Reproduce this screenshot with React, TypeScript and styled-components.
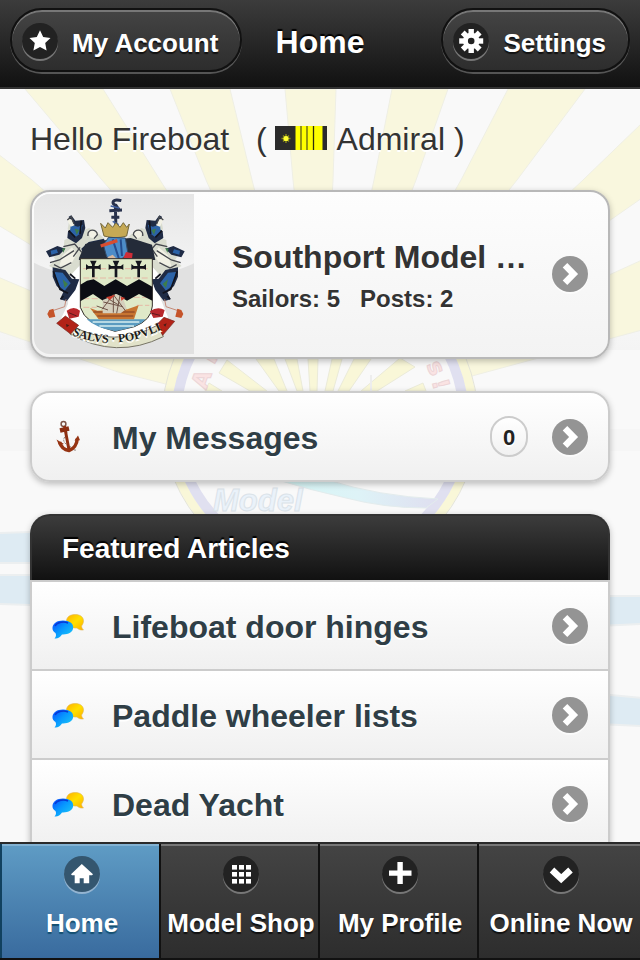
import React from "react";
import styled, { createGlobalStyle, css } from "styled-components";

const GlobalStyle = createGlobalStyle`
  *, *::before, *::after { box-sizing: border-box; }
  body {
    margin: 0;
    background: #f9f9f9;
    color: #333;
    font-family: "Liberation Sans", Arial, Helvetica, sans-serif;
  }
`;

const Page = styled.div`
  display: flex;
  flex-direction: column;
  height: 100vh;
  overflow: hidden;
`;

const Header = styled.header`
  display: grid;
  grid-template-columns: 1fr auto 1fr;
  align-items: start;
  padding: 8px 10px 11px;
  border-bottom: 2px solid #333;
  background: linear-gradient(#3c3c3c, #111);
  color: #fff;
`;

const Title = styled.h1`
  margin: 0;
  font-size: 32px;
  line-height: 68px;
  text-shadow: 0 -2px 1px #000;
`;

const PillButton = styled.button<{ $end?: boolean }>`
  display: flex;
  align-items: center;
  gap: 14px;
  height: 64px;
  justify-self: ${(p) => (p.$end ? "end" : "start")};
  padding: 2px 22px 0 10px;
  border: 2px solid #111;
  border-radius: 32px;
  background: linear-gradient(#444, #2d2d2d);
  box-shadow: inset 0 2px 0 #777, 0 2px 0 #555;
  color: #fff;
  font-family: inherit;
  font-size: 26px;
  font-weight: bold;
  line-height: 32px;
  text-shadow: 0 2px 1px #111;
  cursor: pointer;
`;

const PillLabel = styled.span`
  padding-top: 4px;
`;

const Disc = styled.span<{ $tone?: "dark" | "blue" | "gray" }>`
  display: block;
  flex: none;
  width: 36px;
  height: 36px;
  border-radius: 50%;
  ${(p) =>
    p.$tone === "gray"
      ? css`
          background: #949494;
          box-shadow: 0 2px 0 rgba(255, 255, 255, 0.6);
        `
      : p.$tone === "blue"
        ? css`
            background: #34566f;
            box-shadow: 0 2px 0 #93b4d1;
          `
        : css`
            background: #222;
            box-shadow: 0 2px 0 #777;
          `}
  svg {
    display: block;
  }
`;

const Content = styled.main`
  position: relative;
  z-index: 0;
  flex: 1;
  min-height: 0;
  padding: 30px;
  overflow-y: auto;
  scrollbar-width: none;
`;

const Backdrop = styled.svg`
  position: absolute;
  top: 0;
  left: 0;
  z-index: -1;
  width: 100%;
  height: 100%;
`;

const Greeting = styled.p`
  margin: 0 0 31px;
  font-size: 32px;
  line-height: 40px;
  white-space: pre-wrap;
  text-shadow: 0 2px 0 #fff;
`;

const Rank = styled.svg`
  margin-right: 2px;
`;

const cardLook = css`
  border: 2px solid #ccc;
  border-radius: 20px;
  box-shadow: 0 2px 6px rgba(0, 0, 0, 0.25);
`;

const ClubCard = styled.a`
  ${cardLook}
  display: flex;
  align-items: center;
  gap: 24px;
  margin-bottom: 32px;
  padding: 2px 20px 3px 2px;
  border-color: #b8b8b8;
  background: linear-gradient(#fdfdfd, #f3f3f3);
  color: #333;
  text-decoration: none;
  text-shadow: 0 2px 0 #fff;
`;

const Crest = styled.svg`
  flex: none;
  width: 160px;
  height: 160px;
  margin-right: 14px;
  border-radius: 16px 0 0 16px;
`;

const ClubText = styled.div`
  flex: 1;
  min-width: 0;
  padding-top: 2px;
`;

const ClubName = styled.h2`
  margin: 0 0 6px;
  overflow: hidden;
  font-size: 32px;
  line-height: 42px;
  text-overflow: ellipsis;
  white-space: nowrap;
`;

const ClubStats = styled.p`
  margin: 0;
  font-size: 24px;
  font-weight: bold;
  line-height: 30px;
  white-space: pre-wrap;
`;

const rowLook = css`
  display: flex;
  align-items: center;
  gap: 24px;
  min-height: 87px;
  padding: 0 20px;
  background: linear-gradient(#fff, #f0f0f0);
  color: #2f3e46;
  font-size: 32px;
  font-weight: bold;
  line-height: 40px;
  text-decoration: none;
  text-shadow: 0 2px 0 #fff;
`;

const MessagesRow = styled.a`
  ${cardLook}
  ${rowLook}
  min-height: 91px;
  margin-bottom: 32px;
  border-radius: 20px;
`;

const RowLabel = styled.span`
  flex: 1;
  padding-top: 2px;
`;

const RowIcon = styled.svg`
  flex: none;
  width: 36px;
  height: 36px;
`;

const Count = styled.span`
  display: grid;
  place-items: center;
  width: 38px;
  height: 41px;
  border: 2px solid #ccc;
  border-radius: 20px;
  background: linear-gradient(#fff, #f1f1f1);
  color: #222;
  font-size: 22px;
`;

const Panel = styled.section`
  border-radius: 20px 20px 0 0;
  box-shadow: 0 2px 6px rgba(0, 0, 0, 0.25);
`;

const PanelTitle = styled.h2`
  margin: 0;
  padding: 1px 30px 0;
  border: 2px solid #333;
  border-bottom: 0;
  border-radius: 20px 20px 0 0;
  background: linear-gradient(#3c3c3c, #111);
  color: #fff;
  font-size: 28px;
  line-height: 63px;
  text-shadow: 0 -2px 1px #000;
`;

const List = styled.ul`
  margin: 0;
  padding: 0;
  border: solid #ccc;
  border-width: 0 2px;
  list-style: none;
`;

const Item = styled.li`
  border-top: 2px solid #ccc;
`;

const ArticleRow = styled.a`
  ${rowLook}
`;

const TabBar = styled.nav`
  display: grid;
  grid-template-columns: repeat(3, 159fr) 163fr;
  border-top: 2px solid #2a2a2a;
  border-bottom: 2px solid #111;
`;

const Tab = styled.a<{ $active?: boolean }>`
  display: flex;
  flex-direction: column;
  align-items: center;
  gap: 14px;
  height: 114px;
  padding: 12px 0 0 3px;
  border-left: 2px solid ${(p) => (p.$active ? "#11415f" : "#111")};
  background: ${(p) =>
    p.$active ? "linear-gradient(#5f9cc5, #396b9e)" : "linear-gradient(#444, #2d2d2d)"};
  box-shadow: inset 0 2px 0 ${(p) => (p.$active ? "#82b2d3" : "#777")};
  color: #fff;
  font-size: 26px;
  font-weight: bold;
  line-height: 34px;
  text-decoration: none;
  text-shadow: 0 2px 1px ${(p) => (p.$active ? "#145072" : "#111")};
  white-space: nowrap;
`;

type GlyphName = "star" | "gear" | "home" | "grid" | "plus" | "down" | "right";

const teeth = [0, 45, 90, 135, 180, 225, 270, 315];
const cells = [9, 16, 23];

const glyphs: Record<GlyphName, React.ReactNode> = {
  star: (
    <path
      fill="#fff"
      d="M18 7.2l3.2 6.8 7.3 1-5.3 5.1 1.4 7.5L18 24l-6.6 3.6 1.4-7.5L7.5 15l7.3-1z"
    />
  ),
  gear: (
    <g>
      {teeth.map((a) => (
        <rect key={a} x="15.5" y="6" width="5.4" height="7" fill="#fff" transform={`rotate(${a} 18.2 18)`} />
      ))}
      <circle cx="18.2" cy="18" r="5.8" fill="none" stroke="#fff" strokeWidth="5" />
    </g>
  ),
  home: (
    <path fill="#fff" d="M17.8 8L29 18.2l-1 1h-2.8v8.1h-5.5v-5h-4v5h-5v-8.1H8l-1-1z" />
  ),
  grid: (
    <g fill="#fff">
      {cells.map((y) =>
        cells.map((x) => <rect key={`${x}-${y}`} x={x} y={y} width="5" height="4.6" />)
      )}
    </g>
  ),
  plus: <path fill="#fff" d="M15.4 6h5.4v8.4h8.7v5.4h-8.7V28h-5.4v-8.2H7v-5.4h8.4z" />,
  down: <path fill="none" stroke="#fff" strokeWidth="6.6" d="M9 14l9.2 8.7L27.5 14" />,
  right: <path fill="none" stroke="#fff" strokeWidth="6.4" d="M13 9.2l8.6 8.7-8.6 8.8" />,
};

function RoundIcon({ name, tone }: { name: GlyphName; tone?: "dark" | "blue" | "gray" }) {
  return (
    <Disc $tone={tone} aria-hidden="true">
      <svg width="36" height="36" viewBox="0 0 36 36">
        {glyphs[name]}
      </svg>
    </Disc>
  );
}

function Insignia() {
  return (
    <Rank width="52" height="24" viewBox="0 0 52 24" role="img" aria-label="Rank insignia">
      <path fill="#2b2b2b" d="M0 0h52v24H0z" />
      <path fill="#ff0" d="M20.500 0h27v24h-27z" />
      <path stroke="#7c7c14" strokeWidth="1.600" d="M26 0v24M32 0v24" />
      <path stroke="#2f2f0c" strokeWidth="1.300" d="M38.500 0v24" />
      <path stroke="#8d8d18" strokeWidth="1.400" d="M11 8v9M6.500 12.500h9M8 9.500l6 6M14 9.500l-6 6" />
      <circle cx="11" cy="12.500" r="2.600" fill="#ff3" />
    </Rank>
  );
}

function Anchor() {
  return (
    <RowIcon viewBox="0 0 36 36" aria-hidden="true">
      <circle cx="11.500" cy="5" r="2.400" fill="none" stroke="#7d5548" strokeWidth="1.500" />
      <path fill="none" stroke="#8d837b" strokeWidth="1" strokeDasharray="2 1" d="M13 10c6 6-5 8 0 14 4 5 11 4 10 8" />
      <path stroke="#8a2f13" strokeWidth="4.500" d="M8 11.500l9-2" />
      <path fill="none" stroke="#8f3012" strokeWidth="3" d="M12.500 7l4.500 24" />
      <path
        fill="none"
        stroke="#963413"
        strokeWidth="3.500"
        d="M7.500 23c1.500 5 5 8 9.500 8.500 4.500-1.500 8-6 8.300-12"
      />
      <path fill="#963413" d="M4.500 20.500l7.500 4.500-5 1zM22.500 21.500l3.500-5 2 4.800z" />
    </RowIcon>
  );
}

function Bubbles() {
  return (
    <RowIcon viewBox="0 0 36 36" aria-hidden="true">
      <defs>
        <linearGradient id="gold" x1="0" y1="0" x2="1" y2="1">
          <stop offset="0" stopColor="#ffb000" />
          <stop offset="0.500" stopColor="#ffe000" />
          <stop offset="1" stopColor="#ffae00" />
        </linearGradient>
        <linearGradient id="azure" x1="0" y1="0" x2="1" y2="1">
          <stop offset="0" stopColor="#0a48ff" />
          <stop offset="0.450" stopColor="#0797ff" />
          <stop offset="1" stopColor="#20d0f5" />
        </linearGradient>
      </defs>
      <path
        fill="url(#gold)"
        stroke="#dfb75b"
        strokeWidth="0.600"
        d="M14.500 12.500C15 8.500 18.500 6.500 23 6.500c5.500 0 8.500 2.600 8.500 6.500 0 2-1 3.700-2 5 .3 2 1 3 2 4-3 .3-5-.5-6.500-2-6 .5-11-3-10.500-7.500z"
      />
      <path
        fill="url(#azure)"
        d="M.5 19.500C1 15.300 5 12.500 11 12.500c6.500 0 10.500 3 10.200 7.300-.4 4.700-5 7-11.200 6.700C8 29.500 5.500 31 2.500 30.500c1.500-1.500 2-3.500 1-5.500-2-1.300-3.300-3-3-5.500z"
      />
      <path fill="none" stroke="#0838d6" strokeWidth="1.500" d="M3 18c2-4 9-5 13-3" />
    </RowIcon>
  );
}

/* One half of the mantling around the helmet; the other half is its mirror image. */
function Mantling() {
  return (
    <g>
      <path fill="#d9dccf" d="M150 112l15 22 24-12-6 32 24-10 24 12 22 20-10 70-62 8-40 44-22-24-32-16 20-18-12-18 36-14 2-28 22-8-12-26z" />
      <path fill="#1f2b45" d="M146 110l8-4 12 16 26-2 4 24-10 30-18 16-26-16 2-20 12-8zM78 214l34-16 24 8-18 18-30 8zM98 262l38 8 20 26 22 2-12 32-26 34-20-6 10-22-20-18-12-28zM206 186l46-10 6 22-28 32-36 6-10-30z" />
      <path fill="#2c63a8" d="M152 134l22 6 14-6-6 26-16 12-16-14zM104 276l24 2 24 32-18 22-22-18zM212 194l26-6-6 24-18 10zM92 212l18-4 4 10-20 6z" />
      <path fill="#3e7d4a" d="M164 146l14 4-8 14zM128 298l16 14-10 12zM196 206l12-10 2 22zM126 206l10-2-6 14z" />
      <path fill="#f2f1e5" d="M140 116l14 2 10 18-12 4zM128 226l28-24 14 20-18 32-34 4zM204 154l22-6 10 12-10 16-16-4z" />
      <path fill="none" stroke="#46484e" strokeWidth="4" d="M142 120l12-10 8 22M130 200l34-8 22 26-8 18M90 248l28-8 44-28M102 254l20 10 32-16M204 168c-4-24 28-22 28-4l-10 12M160 230l20-28" />
      <path fill="none" stroke="#11131d" strokeWidth="5" d="M100 274l20 54 24 12M150 282l16 14M130 348l-8 10M146 152l20 20M184 122l-4 40" />
      <path fill="none" stroke="#c58b79" strokeWidth="3" d="M138 358l-4 22-36 12" />
      <path fill="#c5542a" d="M88 390l12-4 6 24-18 4-6-12z" />
    </g>
  );
}

function Arms() {
  return (
    <Crest viewBox="42 42 480 480" role="img" aria-label="Southport coat of arms">
      <defs>
        <linearGradient id="plate" x1="0" y1="0" x2="0" y2="1">
          <stop offset="0" stopColor="#e6e6e6" />
          <stop offset="1" stopColor="#f5f5f5" />
        </linearGradient>
        <path id="motto" d="M156 464Q282 520 430 446" />
      </defs>
      <path fill="#e1e1e1" d="M42 42h480v480H42z" />
      <path fill="url(#plate)" d="M42 42h480v208c-60 28-110 42-240 42S90 272 42 248z" />
      <path fill="#fff" d="M150 262l-6 110-24 50 34 34q130 60 270-8l20-36-24-60-10-90z" />
      <Mantling />
      <g transform="translate(572 0) scale(-1 1)">
        <Mantling />
      </g>
      <path fill="#242b39" d="M236 182l96-8 64 20 10 46H176l20-48z" />
      <path fill="none" stroke="#27304c" strokeWidth="9" d="M304 62c-30-8-30 12-16 14l12 18M286 74l2 76M268 92l38-2M274 112h24" />
      <path fill="none" stroke="#3f5fa0" strokeWidth="4" d="M272 78l26 6M278 124l18 10" />
      <path fill="#c6a955" stroke="#74683b" strokeWidth="3" d="M242 130l14 14 8-16 14 14 10-14 12 14 10-14 10 14 8-10-8 36q-34 10-68 0z" />
      <path fill="#4d8cc8" stroke="#334a68" strokeWidth="3" d="M266 172l50 2 8 48-34 26-30-18-10-36z" />
      <path stroke="#254d8f" strokeWidth="6" d="M278 178l20 62M302 178l4 50" />
      <path stroke="#d84d2f" strokeWidth="10" d="M242 198l50-16" />
      <path fill="#cf2d38" d="M318 216l20 4-2 16-26-2z" />
      <path fill="#d7b8a0" d="M262 232l16-8 18 18-8 10z" />
      <path fill="#dfe9c8" stroke="#35302c" strokeWidth="3" d="M181 236h216v142q-2 42-54 62l-58 14q-90-22-104-72z" />
      <path stroke="#e5b8a5" strokeWidth="3" strokeDasharray="18 7" d="M190 266h198M190 294h198M190 356h70M316 352h68M190 382h40M350 376h38" />
      {[220, 288, 356].map((x) => (
        <g key={x}>
          <path stroke="#14151d" strokeWidth="8" d={`M${x} 244v48M${x - 20} 262h40`} />
          <path fill="#14151d" d={`M${x - 10} 242h20l-6 12h-8zM${x - 22} 252l12 10-12 8zM${x + 22} 252l-12 10 12 8z`} />
        </g>
      ))}
      <path fill="#0c0d14" d="M181 314l20-12 20-4 32 20 34-20 34 20 36-20 40 22v42l-40-20-36 20-34-20-36 22-32-22-38 22z" />
      <path fill="#5a9bc0" d="M200 418h176q-14 22-90 36-58-10-86-36z" />
      <path stroke="#d6eef0" strokeWidth="4" d="M218 426h140M238 438h104" />
      <path fill="#c87531" d="M210 384l22 8 90-4 34-12-14 42H236z" />
      <path fill="none" stroke="#7c3d25" strokeWidth="3" d="M220 396h124M232 408h108" />
      <path fill="#d5cfbd" d="M248 360l24-10 18-8 18 10 12 34-18 14h-54z" />
      <path fill="none" stroke="#6f5448" strokeWidth="3" d="M246 388l34-44 36 48M280 346v52M250 366l58 14M264 356l34 20M300 346l-10 54M230 378l34 12" />
      <path fill="#cd3c2d" d="M258 352l28-8-16 16zM302 350l14 4-12 8z" />
      <path fill="#b8282c" d="M140 392q22-16 40 0l-4 18-28 6zM390 394q22-16 44-4l-6 20-28 4z" />
      <path fill="none" stroke="#5b191c" strokeWidth="3" d="M146 398l24 10M396 400l24 6" />
      <path fill="#e1e2c9" stroke="#777466" strokeWidth="3" d="M154 436q126 72 262-2l14 36q-142 70-280-8z" />
      <path fill="#b22318" stroke="#74241c" strokeWidth="2" d="M110 430l26-22 40 28-24 26zM432 412l32 12-36 42-18-32z" />
      <path fill="#461d18" d="M138 432l10 4-8 6zM430 434l10-4-4 10z" />
      <text fill="#1c1b19" fontFamily="Liberation Serif, serif" fontSize="36" fontWeight="bold">
        <textPath href="#motto">SALVS · POPVLI</textPath>
      </text>
    </Crest>
  );
}

function Sunburst() {
  return (
    <Backdrop viewBox="0 89 640 753" preserveAspectRatio="xMidYMin slice" aria-hidden="true">
      <defs>
        <linearGradient id="wave" x1="0" x2="1">
          <stop offset="0" stopColor="#d5f6f5" />
          <stop offset="0.500" stopColor="#def3f7" />
          <stop offset="1" stopColor="#dfdff0" />
        </linearGradient>
        <linearGradient id="sky" x1="0" y1="0" x2="0" y2="1">
          <stop offset="0" stopColor="#f9f9f9" />
          <stop offset="1" stopColor="#f4f4f4" />
        </linearGradient>
      </defs>
      <path fill="#f9f9f9" d="M0 89h640v753H0z" />
      <path fill="url(#sky)" d="M0 290h640v60H0z" />
      <path fill="#f6f6f6" d="M0 429h640v22H0z" />
      <g fill="#f9f7de" stroke="#efefe4" strokeWidth="1">
        <path d="M25 89h78l57 91 156 248L102 180z" />
        <path d="M170 89h60l22 91 64 248-110-248z" />
        <path d="M285 89h51l-3 91-13 248-27-248z" />
        <path d="M392 89h56l-32 91-96 248 54-248z" />
        <path d="M508 89h77l-68 91-197 248 141-248z" />
        <path d="M-2 154l34 26 284 248L31 245l-33-20z" />
        <path d="M-2 277l33 14 285 131-198-50L-2 331z" />
        <path d="M642 123l-59 57-263 248 289-207 33-23z" />
        <path d="M642 260l-33 15-289 149 152-48 170-46z" />
      </g>
      <circle cx="320" cy="419" r="153" fill="#f9f9f9" stroke="#f9f7d8" strokeWidth="9" />
      <circle cx="320" cy="419" r="158" fill="none" stroke="#e5e5d8" strokeWidth="1" />
      <circle cx="320" cy="419" r="144" fill="none" stroke="#e0e0f0" strokeWidth="10" />
      <g fill="#f9f7d8" stroke="#ebebd9" strokeWidth="1">
        <path d="M227 360l-8 13 31 18h17z" />
        <path d="M256 359h18l13 32h-8z" />
        <path d="M285 359h12l6 32h-6z" />
        <path d="M308 359h10l-1 32h-7z" />
        <path d="M332 359h10l-9 32h-8z" />
        <path d="M354 359h17l-22 32h-11z" />
        <path d="M400 358l15 9-38 24h-16z" />
        <path d="M209 383l-4 8h17z" />
        <path d="M423 383l3 8h-21z" />
      </g>
      <path stroke="#ededed" strokeWidth="2" d="M371 375v16" />
      <g fill="#fae3e3" stroke="#ecd5d7" fontFamily="DejaVu Sans, sans-serif" fontSize="23" fontWeight="bold" textAnchor="middle">
        <text transform="translate(209 382) rotate(-70)">A</text>
        <text transform="translate(218 358) rotate(-59)">P</text>
        <text transform="translate(421 357) rotate(60)">r</text>
        <text transform="translate(429 371) rotate(66)">s</text>
        <text transform="translate(433 386) rotate(75)">!</text>
      </g>
      <path fill="url(#wave)" stroke="#e3eced" strokeWidth="1" d="M278 480h50q50 16 110 19l-12 9q-42 0-80-10-36-8-68-18z" />
      <text x="213" y="511" fill="#eaf2fa" stroke="#dbe3e9" fontSize="31" fontWeight="bold" fontStyle="italic">
        Model
      </text>
      <g fill="#deebf3" stroke="#eceff0" strokeWidth="2">
        <path d="M-2 533l62-2v32H-2zM-2 575h62v31l-62-2zM600 596h42v28l-42 2zM600 694l42 4v28l-42-2z" />
      </g>
    </Backdrop>
  );
}

const articles = ["Lifeboat door hinges", "Paddle wheeler lists", "Dead Yacht"];

const tabs: { label: string; icon: GlyphName; active?: boolean }[] = [
  { label: "Home", icon: "home", active: true },
  { label: "Model Shop", icon: "grid" },
  { label: "My Profile", icon: "plus" },
  { label: "Online Now", icon: "down" },
];

export default function App() {
  return (
    <>
      <GlobalStyle />
      <Page>
        <Header>
          <PillButton type="button">
            <RoundIcon name="star" />
            <PillLabel>My Account</PillLabel>
          </PillButton>
          <Title>Home</Title>
          <PillButton type="button" $end>
            <RoundIcon name="gear" />
            <PillLabel>Settings</PillLabel>
          </PillButton>
        </Header>

        <Content>
          <Sunburst />
          <Greeting>
            {"Hello Fireboat\u00a0\u00a0 ( "}
            <Insignia />
            {" Admiral )"}
          </Greeting>

          <ClubCard href="#club">
            <Arms />
            <ClubText>
              <ClubName>Southport Model …</ClubName>
              <ClubStats>{"Sailors: 5\u00a0\u00a0 Posts: 2"}</ClubStats>
            </ClubText>
            <RoundIcon name="right" tone="gray" />
          </ClubCard>

          <MessagesRow href="#messages">
            <Anchor />
            <RowLabel>My Messages</RowLabel>
            <Count>0</Count>
            <RoundIcon name="right" tone="gray" />
          </MessagesRow>

          <Panel>
            <PanelTitle>Featured Articles</PanelTitle>
            <List>
              {articles.map((title) => (
                <Item key={title}>
                  <ArticleRow href="#article">
                    <Bubbles />
                    <RowLabel>{title}</RowLabel>
                    <RoundIcon name="right" tone="gray" />
                  </ArticleRow>
                </Item>
              ))}
            </List>
          </Panel>
        </Content>

        <TabBar>
          {tabs.map((tab) => (
            <Tab key={tab.label} href="#tab" $active={tab.active} aria-current={tab.active ? "page" : undefined}>
              <RoundIcon name={tab.icon} tone={tab.active ? "blue" : "dark"} />
              {tab.label}
            </Tab>
          ))}
        </TabBar>
      </Page>
    </>
  );
}
